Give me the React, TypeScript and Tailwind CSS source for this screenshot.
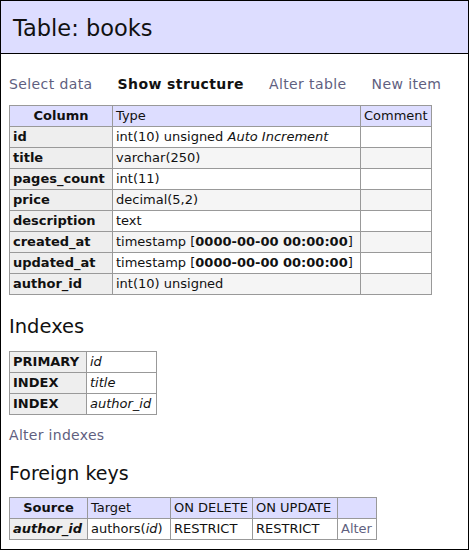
import React from 'react';

const font = { fontFamily: '"DejaVu Sans", Verdana, sans-serif' };

const columns: { name: string; type: React.ReactNode }[] = [
  { name: 'id', type: <>int(10) unsigned <i>Auto Increment</i></> },
  { name: 'title', type: 'varchar(250)' },
  { name: 'pages_count', type: 'int(11)' },
  { name: 'price', type: 'decimal(5,2)' },
  { name: 'description', type: 'text' },
  { name: 'created_at', type: <>timestamp [<b>0000-00-00 00:00:00</b>]</> },
  { name: 'updated_at', type: <>timestamp [<b>0000-00-00 00:00:00</b>]</> },
  { name: 'author_id', type: 'int(10) unsigned' },
];

const indexes = [
  ['PRIMARY', 'id'],
  ['INDEX', 'title'],
  ['INDEX', 'author_id'],
];

const base = 'border border-[#999] px-[3px] h-[21px] leading-[16px]';
const cell = `${base} text-left font-normal`;
const th = `${base} text-left font-bold bg-[#eee]`;
const headTh = `${base} text-center font-bold`;

export default function App() {
  return (
    <div className="w-[469px] h-[550px] border border-black bg-white text-[13px] text-[#111] overflow-hidden" style={font}>
      {/* Header */}
      <div className="h-[53px] bg-[#ddf] border-b border-black pl-[12px] flex items-center">
        <h1 className="text-[22.5px] leading-[26px] mt-[2px]">Table: books</h1>
      </div>

      <div className="pl-[8px]">
        {/* Nav */}
        <div className="mt-[22px] flex gap-[25px] leading-[16px] text-[14px] tracking-[0.4px]">
          <span className="text-[#5f5f80]">Select data</span>
          <span className="font-bold">Show structure</span>
          <span className="text-[#5f5f80]">Alter table</span>
          <span className="text-[#5f5f80]">New item</span>
        </div>

        {/* Structure */}
        <table className="mt-[13px] border-collapse">
          <thead>
            <tr className="bg-[#ddf]">
              <th className={`${headTh} w-[103px]`}>Column</th>
              <td className={`${cell} w-[248px]`}>Type</td>
              <td className={`${cell} w-[71px]`}>Comment</td>
            </tr>
          </thead>
          <tbody>
            {columns.map((c, i) => (
              <tr key={c.name} className={i % 2 === 1 ? 'bg-[#f5f5f5]' : 'bg-white'}>
                <th className={th}>{c.name}</th>
                <td className={cell}>{c.type}</td>
                <td className={cell}></td>
              </tr>
            ))}
          </tbody>
        </table>

        {/* Indexes */}
        <h2 className="mt-[21px] text-[19.5px] leading-[22px]">Indexes</h2>
        <table className="mt-[13px] border-collapse">
          <tbody>
            {indexes.map(([k, v], i) => (
              <tr key={i}>
                <th className={`${th} w-[77px]`}>{k}</th>
                <td className={`${cell} w-[70px]`}><i>{v}</i></td>
              </tr>
            ))}
          </tbody>
        </table>
        <div className="mt-[12px] leading-[16px] text-[14px] tracking-[0.3px] text-[#5f5f80]">Alter indexes</div>

        {/* Foreign keys */}
        <h2 className="mt-[19px] text-[19px] leading-[22px]">Foreign keys</h2>
        <table className="mt-[13px] border-collapse">
          <thead>
            <tr className="bg-[#ddf]">
              <th className={`${headTh} w-[78px]`}>Source</th>
              <td className={`${cell} w-[83px]`}>Target</td>
              <td className={`${cell} w-[82px]`}>ON DELETE</td>
              <td className={`${cell} w-[85px]`}>ON UPDATE</td>
              <td className={`${cell} w-[39px]`}></td>
            </tr>
          </thead>
          <tbody>
            <tr>
              <th className={th}><i>author_id</i></th>
              <td className={cell}>authors(<i>id</i>)</td>
              <td className={cell}>RESTRICT</td>
              <td className={cell}>RESTRICT</td>
              <td className={`${cell} text-[#5f5f80]`}>Alter</td>
            </tr>
          </tbody>
        </table>
      </div>
    </div>
  );
}
